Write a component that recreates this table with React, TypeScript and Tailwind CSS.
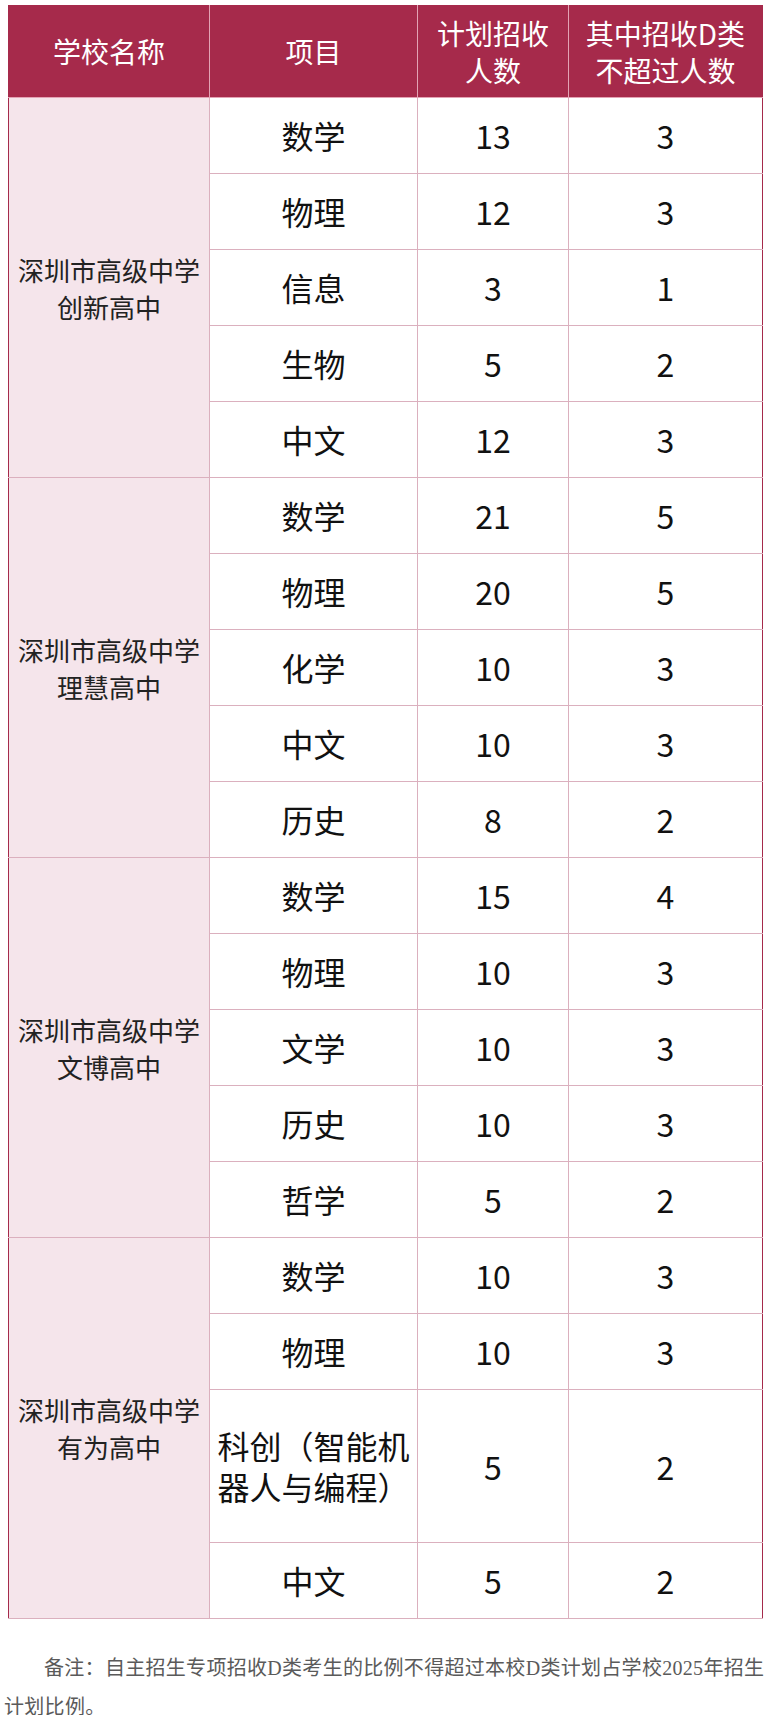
import React from "react";

type Row = { item: string; plan: number; d: number; tall?: boolean };
type School = { name: string[]; rows: Row[] };

const schools: School[] = [
  {
    name: ["深圳市高级中学", "创新高中"],
    rows: [
      { item: "数学", plan: 13, d: 3 },
      { item: "物理", plan: 12, d: 3 },
      { item: "信息", plan: 3, d: 1 },
      { item: "生物", plan: 5, d: 2 },
      { item: "中文", plan: 12, d: 3 },
    ],
  },
  {
    name: ["深圳市高级中学", "理慧高中"],
    rows: [
      { item: "数学", plan: 21, d: 5 },
      { item: "物理", plan: 20, d: 5 },
      { item: "化学", plan: 10, d: 3 },
      { item: "中文", plan: 10, d: 3 },
      { item: "历史", plan: 8, d: 2 },
    ],
  },
  {
    name: ["深圳市高级中学", "文博高中"],
    rows: [
      { item: "数学", plan: 15, d: 4 },
      { item: "物理", plan: 10, d: 3 },
      { item: "文学", plan: 10, d: 3 },
      { item: "历史", plan: 10, d: 3 },
      { item: "哲学", plan: 5, d: 2 },
    ],
  },
  {
    name: ["深圳市高级中学", "有为高中"],
    rows: [
      { item: "数学", plan: 10, d: 3 },
      { item: "物理", plan: 10, d: 3 },
      { item: "科创（智能机器人与编程）", plan: 5, d: 2, tall: true },
      { item: "中文", plan: 5, d: 2 },
    ],
  },
];

const cell = "border border-[#dbb0be] text-center align-middle text-[32px] leading-[41px] text-[#111]";

export default function App() {
  return (
    <div className="w-[771px] bg-white pt-[5px] font-['Noto_Sans_CJK_SC',sans-serif]">
      <table className="ml-[8px] w-[754px] table-fixed border-collapse border border-[#a52a4b]">
        <colgroup>
          <col className="w-[201px]" />
          <col className="w-[208px]" />
          <col className="w-[151px]" />
          <col className="w-[194px]" />
        </colgroup>
        <thead>
          <tr className="h-[92px] bg-[#a62a4b] text-white">
            <th className="border border-[#e3a3b4] border-t-[#a62a4b] border-l-[#a62a4b] px-[8px] text-[28px] font-normal leading-[37px]">学校名称</th>
            <th className="border border-[#e3a3b4] border-t-[#a62a4b] px-[8px] text-[28px] font-normal leading-[37px]">项目</th>
            <th className="border border-[#e3a3b4] border-t-[#a62a4b] px-[8px] text-[28px] font-normal leading-[37px]">计划招收人数</th>
            <th className="border border-[#e3a3b4] border-t-[#a62a4b] border-r-[#a62a4b] px-[8px] text-[28px] font-normal leading-[37px]">其中招收D类不超过人数</th>
          </tr>
        </thead>
        <tbody>
          {schools.map((s, si) =>
            s.rows.map((r, ri) => (
              <tr key={si + "-" + ri} className={r.tall ? "h-[153px]" : "h-[76px]"}>
                {ri === 0 && (
                  <td
                    rowSpan={s.rows.length}
                    className="border border-[#dbb0be] border-l-[#a52a4b] bg-[#f5e5eb] px-[8px] text-center align-middle text-[26px] leading-[37px] text-[#222]"
                  >
                    {s.name[0]}
                    <br />
                    {s.name[1]}
                  </td>
                )}
                <td className={cell + " px-[3px] text-[31px]"}>{r.item}</td>
                <td className={cell + " px-[8px]"}>{r.plan}</td>
                <td className={cell + " px-[8px] border-r-[#a52a4b]"}>{r.d}</td>
              </tr>
            ))
          )}
        </tbody>
      </table>
      <p className="mt-[30px] px-[4px] indent-[2em] font-['Liberation_Serif','Noto_Sans_CJK_SC',serif] text-[20px] leading-[39px] tracking-[0.3px] text-[#5a5a5a]">
        备注：自主招生专项招收D类考生的比例不得超过本校D类计划占学校2025年招生计划比例。
      </p>
    </div>
  );
}
